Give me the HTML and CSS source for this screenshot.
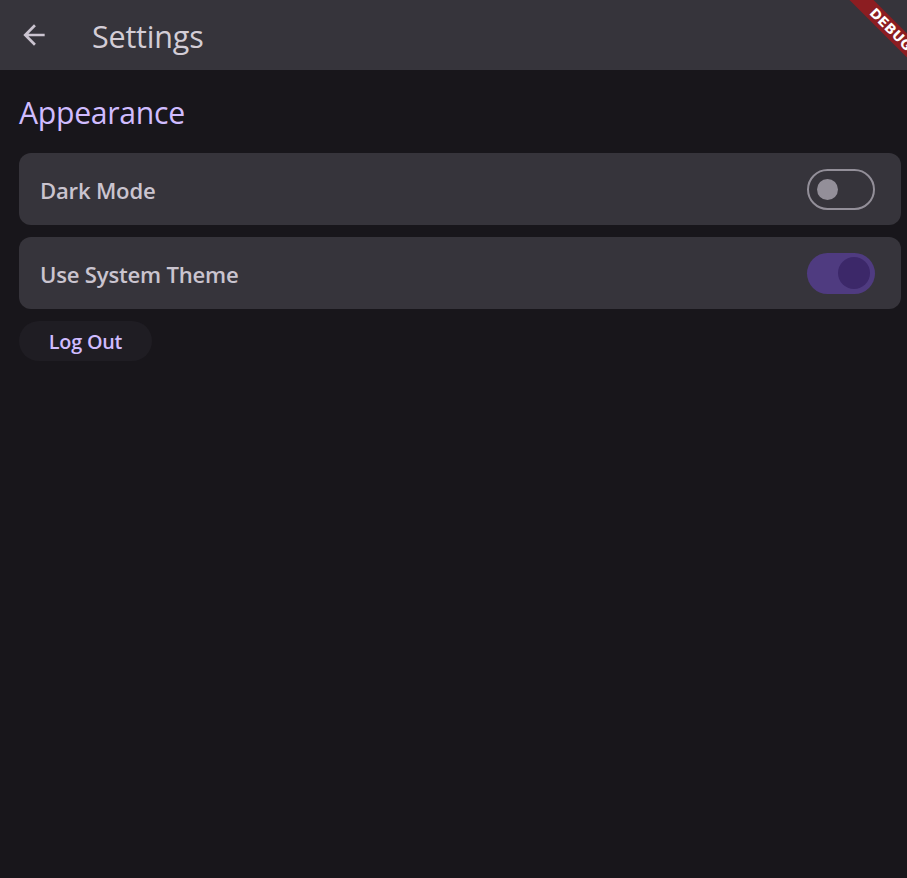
FILE: index.html
```html
<!DOCTYPE html>
<html>
<head>
<meta charset="utf-8">
<link rel="stylesheet" href="styles.css">
</head>
<body>
<div class="app">
  <header class="appbar">
    <svg class="back" viewBox="0 0 24 24" width="32" height="32"><path d="M20 11H7.830l5.59-5.59L12 4l-8 8 8 8 1.41-1.41L7.83 13H20v-2z" fill="#cbc4d0"/></svg>
    <h1 class="title">Settings</h1>
  </header>
  <main class="content">
    <h2 class="section">Appearance</h2>
    <div class="card">
      <span class="label">Dark Mode</span>
      <span class="switch off"><span class="thumb"></span></span>
    </div>
    <div class="card">
      <span class="label">Use System Theme</span>
      <span class="switch on"><span class="thumb"></span></span>
    </div>
    <button class="logout">Log Out</button>
  </main>
  <div class="debug"><span>DEBUG</span></div>
</div>
</body>
</html>
```
FILE: styles.css
```css
html, body {
  margin: 0;
  padding: 0;
  background: #18161b;
  font-family: "Open Sans", "Noto Sans", sans-serif;
}
.app {
  position: relative;
  width: 907px;
  height: 878px;
  overflow: hidden;
  background: #18161b;
}
.appbar {
  height: 70px;
  background: #36343b;
  display: flex;
  align-items: center;
  padding-left: 18px;
  box-sizing: border-box;
}
.back {
  display: block;
  margin-top: 0;
}
.title {
  margin: 0 0 0 42px;
  font-size: 30.5px;
  font-weight: 400;
  color: #d3cdd6;
  letter-spacing: -0.2px;
  margin-top: 2px;
}
.content {
  padding: 0 6px 0 19px;
  display: flex;
  flex-direction: column;
  align-items: stretch;
}
.section {
  margin: 22px 0 0 0;
  height: 61px;
  font-size: 30.2px;
  line-height: 42px;
  font-weight: 400;
  color: #d0bcff;
  letter-spacing: -0.3px;
}
.card {
  height: 72px;
  background: #36343b;
  border-radius: 12px;
  display: flex;
  align-items: center;
  justify-content: space-between;
  padding: 0 26px 0 21px;
  margin-bottom: 12px;
}
.label {
  font-size: 22.1px;
  font-weight: 600;
  color: #cac4cf;
  letter-spacing: -0.2px;
  margin-top: 2px;
}
.switch {
  position: relative;
  width: 68px;
  height: 41px;
  border-radius: 21px;
  box-sizing: border-box;
  display: flex;
  align-items: center;
}
.switch.off {
  border: 2.5px solid #938f99;
  background: #36343b;
}
.switch.off .thumb {
  width: 21px;
  height: 21px;
  border-radius: 50%;
  background: #938f99;
  margin-left: 8px;
}
.switch.on {
  background: #4f3b80;
  justify-content: flex-end;
}
.switch.on .thumb {
  width: 32px;
  height: 32px;
  border-radius: 50%;
  background: #3c2869;
  margin-right: 5px;
}
.logout {
  align-self: flex-start;
  width: 133px;
  height: 40px;
  border: none;
  border-radius: 20px;
  background: #1f1d23;
  color: #d0bcff;
  font-family: "Open Sans", "Noto Sans", sans-serif;
  font-size: 19.8px;
  font-weight: 600;
  letter-spacing: -0.2px;
  padding: 0;
}
.debug {
  position: absolute;
  top: 0;
  right: 0;
  width: 100px;
  height: 100px;
  overflow: hidden;
}
.debug span {
  position: absolute;
  top: 21px;
  left: 19px;
  width: 130px;
  height: 17px;
  background: #8c1d21;
  color: #fff;
  font-family: "DejaVu Sans", sans-serif;
  font-weight: 700;
  font-size: 13.5px;
  line-height: 17px;
  text-align: center;
  transform: rotate(45deg);
  letter-spacing: 0.2px;
}
```
